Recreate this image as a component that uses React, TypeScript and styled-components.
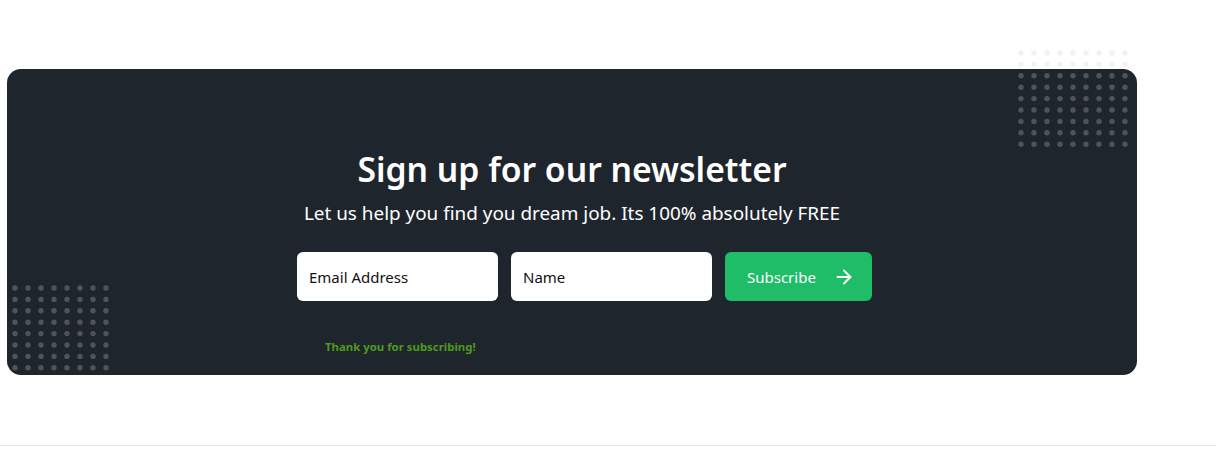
import styled, { createGlobalStyle } from "styled-components"
import { ArrowRight } from "lucide-react"

const GlobalStyle = createGlobalStyle`
  body {
    margin: 0;
    background: #ffffff;
    font-family: "Noto Sans", "Open Sans", sans-serif;
  }
`

interface IDots {
  cols: number
  rows: number
}

const Dots = ({ cols, rows }: IDots) => {
  const dx = 13
  const dy = 11.4
  const dots = []
  for (let r = 0; r < rows; r++) {
    for (let c = 0; c < cols; c++) {
      dots.push(<circle key={`${r}-${c}`} cx={3 + c * dx} cy={3 + r * dy} r={2.7} />)
    }
  }
  return (
    <svg width={(cols - 1) * dx + 6} height={(rows - 1) * dy + 6} fill="rgb(205,208,212)" fillOpacity={0.28}>
      {dots}
    </svg>
  )
}

const App = () => {
  return (
    <Page>
      <GlobalStyle />
      <Card>
        <TopDots><Dots cols={9} rows={9} /></TopDots>
        <BottomDots><Dots cols={8} rows={8} /></BottomDots>
        <Title>Sign up for our newsletter</Title>
        <Subtitle>Let us help you find you dream job. Its 100% absolutely FREE</Subtitle>
        <Form onSubmit={(e) => e.preventDefault()}>
          <Row>
            <Input type="email" placeholder="Email Address" />
            <Input type="text" placeholder="Name" />
            <Button type="submit">
              Subscribe
              <ArrowRight size={22} strokeWidth={2.2} />
            </Button>
          </Row>
          <Thanks>Thank you for subscribing!</Thanks>
        </Form>
      </Card>
      <Footer />
    </Page>
  )
}

const Page = styled.div`
  width: 1216px;
  padding-top: 69px;
`
const Card = styled.section`
  position: relative;
  box-sizing: border-box;
  margin-left: 7px;
  width: 1130px;
  height: 306px;
  padding-top: 78px;
  background: #1f252d;
  border-radius: 14px;
  display: flex;
  flex-direction: column;
  align-items: center;
`
const TopDots = styled.div`
  position: absolute;
  top: -19px;
  right: 9px;
  line-height: 0;
`
const BottomDots = styled.div`
  position: absolute;
  bottom: 4px;
  left: 5px;
  line-height: 0;
`
const Title = styled.h2`
  margin: 0;
  color: #ffffff;
  font-size: 33.7px;
  font-weight: 600;
  line-height: 44px;
`
const Subtitle = styled.p`
  margin: 9px 0 0;
  color: #ffffff;
  font-size: 18.9px;
  line-height: 26px;
`
const Form = styled.form`
  margin-top: 26px;
  padding-left: 25px;
  display: flex;
  flex-direction: column;
`
const Row = styled.div`
  display: flex;
  gap: 13px;
`
const Input = styled.input`
  box-sizing: border-box;
  width: 201px;
  height: 49px;
  padding: 0 12px;
  border: none;
  border-radius: 6px;
  background: #ffffff;
  font-family: inherit;
  font-size: 15px;
  color: #111;
  outline: none;
  &::placeholder {
    color: #111;
    opacity: 1;
  }
`
const Button = styled.button`
  box-sizing: border-box;
  width: 147px;
  height: 49px;
  padding: 0 17px 0 22px;
  border: none;
  border-radius: 6px;
  background: #1fbd67;
  color: #ffffff;
  font-family: inherit;
  font-size: 15px;
  display: flex;
  align-items: center;
  justify-content: space-between;
  cursor: pointer;
`
const Thanks = styled.p`
  margin: 38px 0 0 28px;
  color: #4e9a1c;
  font-size: 11.4px;
  font-weight: 700;
`
const Footer = styled.div`
  margin-top: 70px;
  border-top: 1px solid #e6e6e6;
  height: 22px;
`

export default App
